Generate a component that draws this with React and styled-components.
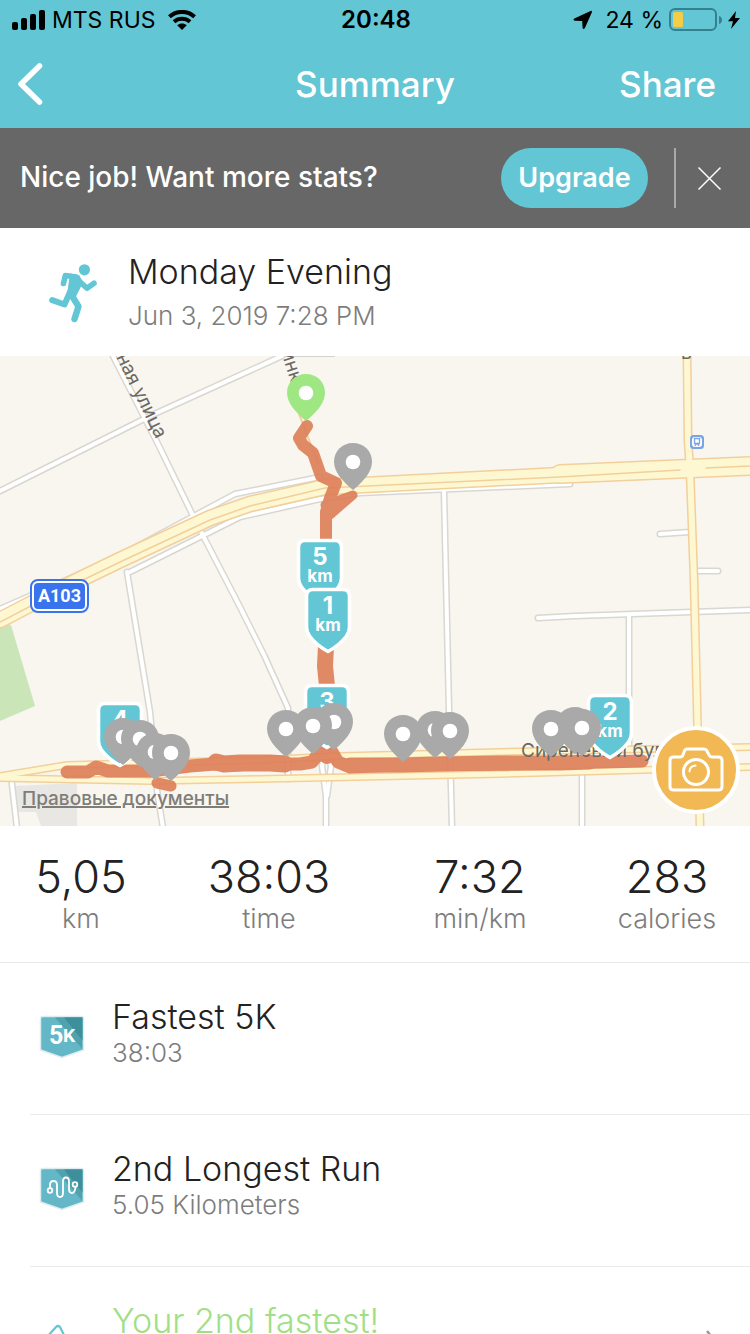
import React from "react";
import styled, { createGlobalStyle } from "styled-components";

const teal = "#62c6d5";

const GlobalStyle = createGlobalStyle`
  * { box-sizing: border-box; }
  body {
    margin: 0;
    background: #fff;
    color: #222;
    font-family: Inter, "Liberation Sans", sans-serif;
  }
  button { border: 0; padding: 0; background: none; font-family: inherit; cursor: pointer; }
  h1, h2, h3, p, ul { margin: 0; padding: 0; font-weight: inherit; }
  svg { display: block; }
`;

const Screen = styled.div`
  display: flex;
  flex-direction: column;
  height: 100vh;
  overflow: hidden;
`;

const StatusBar = styled.div`
  flex: none;
  display: grid;
  grid-template-columns: 1fr auto 1fr;
  align-items: center;
  height: 40px;
  padding: 0 10px 0 12px;
  background: ${teal};
  color: #000;
  font-size: 23px;
  line-height: 40px;
`;

const StatusGroup = styled.div`
  display: flex;
  align-items: center;
  justify-content: ${(p) => (p.$end ? "flex-end" : "flex-start")};
  gap: 6px;
  white-space: nowrap;
`;

const StatusText = styled.span`
  margin: ${(p) => (p.$end ? "0 0 0 6px" : "0 6px 0 0")};
`;

const Clock = styled.div`
  font-size: 24px;
  font-weight: 600;
`;

const NavBar = styled.header`
  flex: none;
  display: grid;
  grid-template-columns: 1fr auto 1fr;
  align-items: center;
  height: 88px;
  padding: 0 16px;
  background: ${teal};
  color: #fff;
`;

const NavTitle = styled.h1`
  font-size: 35px;
  font-weight: 500;
`;

const NavButton = styled.button`
  justify-self: ${(p) => (p.$end ? "end" : "start")};
  margin-right: ${(p) => (p.$end ? 18 : 0)}px;
  color: #fff;
  font-size: 35px;
  font-weight: 500;
`;

const Banner = styled.section`
  flex: none;
  display: flex;
  align-items: center;
  height: 100px;
  padding: 0 28px 0 20px;
  background: #676767;
  color: #fff;
  font-size: 28px;
  font-weight: 500;
`;

const BannerText = styled.p`
  flex: 1;
  padding-bottom: 2px;
`;

const UpgradeButton = styled.button`
  width: 147px;
  height: 60px;
  padding-bottom: 2px;
  border-radius: 30px;
  background: ${teal};
  color: #fff;
  font-size: 27px;
  font-weight: 600;
`;

const Divider = styled.span`
  width: 2px;
  height: 60px;
  margin: 0 21px 0 26px;
  background: #a9a9a9;
`;

const Activity = styled.section`
  flex: none;
  display: flex;
  align-items: center;
  height: 128px;
  padding: 4px 0 0 48px;
  gap: 30px;
`;

const ActivityName = styled.h2`
  font-size: 34px;
  font-weight: 300;
  line-height: 44px;
`;

const Muted = styled.p`
  color: #7d7d7d;
  font-size: 26px;
  font-weight: 300;
  line-height: ${(p) => (p.$tall ? 44 : 32)}px;
`;

const MapArea = styled.section`
  flex: none;
  position: relative;
  height: 470px;
  overflow: hidden;
  background: #f8f6ee;
`;

const MapDrawing = styled.svg`
  width: 100%;
  height: 100%;
`;

const Marker = styled.div`
  position: absolute;
  left: ${(p) => p.$x}px;
  top: ${(p) => p.$y}px;
`;

const Shield = styled(Marker)`
  width: 48px;
  height: 67px;
  color: #fff;
  font-weight: 700;
  text-align: center;
`;

const ShieldShape = styled.svg`
  position: absolute;
  inset: 0;
`;

const ShieldNumber = styled.div`
  position: relative;
  padding-top: 6px;
  font-size: 24px;
  line-height: 26px;
`;

const ShieldUnit = styled.div`
  position: relative;
  font-size: 17px;
  line-height: 12px;
`;

const RoadBadge = styled(Marker)`
  width: 59px;
  height: 34px;
  border: 2px solid #3973ee;
  border-radius: 8px;
  background: #fff;
  padding: 2px;
`;

const RoadNumber = styled.div`
  border-radius: 4px;
  background: #3973ee;
  color: #fff;
  font-family: Roboto, sans-serif;
  font-size: 18px;
  font-weight: 700;
  line-height: 26px;
  text-align: center;
`;

const LegalLink = styled.a`
  position: absolute;
  left: 22px;
  bottom: 15px;
  color: #7f7d79;
  font-size: 19px;
  font-weight: 500;
  line-height: 24px;
  text-decoration-thickness: 2px;
`;

const CameraButton = styled.button`
  position: absolute;
  right: 10px;
  bottom: 12px;
  width: 88px;
  height: 88px;
  border: 4px solid #fff;
  border-radius: 50%;
  background: #f1b853;
  display: grid;
  place-items: center;
`;

const Stats = styled.section`
  flex: none;
  display: grid;
  grid-template-columns: 162fr 214fr 208fr 166fr;
  height: 137px;
  padding-top: 25px;
  border-bottom: 1px solid #e8e8e8;
  text-align: center;
`;

const StatValue = styled.p`
  font-size: 45px;
  font-weight: 300;
  line-height: 52px;
`;

const StatLabel = styled(Muted)`
  font-size: 27px;
`;

const Achievements = styled.ul`
  list-style: none;
  padding-left: 30px;
`;

const Achievement = styled.li`
  display: flex;
  height: 152px;
  padding: 34px 34px 0 8px;
  border-bottom: 1px solid #ebebeb;
`;

const AchievementIcon = styled.div`
  width: 74px;
  padding-top: 18px;
`;

const AchievementBody = styled.div`
  flex: 1;
`;

const AchievementName = styled.h3`
  color: ${(p) => (p.$highlight ? "#a0df87" : "#222")};
  font-size: 34px;
  font-weight: 300;
  line-height: 40px;
`;

const MedalText = styled.text`
  fill: #fff;
  font-family: Roboto, sans-serif;
  font-weight: 700;
`;

const StreetText = styled.text`
  fill: #6b6864;
  font-family: Inter, sans-serif;
  font-size: 19px;
`;

const SignalIcon = () => (
  <svg width="34" height="21" viewBox="0 0 34 21" aria-hidden="true">
    <rect x="0" y="12" width="6" height="8" rx="2" />
    <rect x="9" y="8" width="6" height="12" rx="2" />
    <rect x="18" y="4" width="6" height="16" rx="2" />
    <rect x="27" y="0" width="6" height="20" rx="2" />
  </svg>
);

const WifiIcon = () => (
  <svg width="28" height="20" viewBox="0 0 28 20" aria-hidden="true">
    <g fill="none" stroke="#000" strokeWidth="4">
      <path d="M1.4 6.7C8.5 .3 19.5 .3 26.6 6.7" />
      <path d="M6 11.7c4.7-3.9 11.3-3.9 16 0" />
    </g>
    <path d="M14 20l-4.8-4.8c2.8-2.3 6.8-2.3 9.6 0z" />
  </svg>
);

const LocationIcon = () => (
  <svg width="20" height="20" viewBox="0 0 20 20" aria-hidden="true">
    <path d="M17.600 1 1.300 8.400Q-.6 10.300 1.800 10.800L9.200 11 9.600 17.800Q10.200 20.300 11.900 18L18.900 2.300Q19.300.400 17.600 1z" />
  </svg>
);

const BatteryIcon = () => (
  <svg width="53" height="24" viewBox="0 0 53 24" aria-hidden="true">
    <rect x="1" y="1" width="46" height="21" rx="5" fill="none" stroke="#34808c" strokeWidth="2" />
    <rect x="4" y="4" width="10" height="15" rx="1.5" fill="#f4cc45" />
    <path d="M50 8c4 1 4 7 0 8z" fill="#34808c" />
  </svg>
);

const BoltIcon = () => (
  <svg width="12" height="20" viewBox="0 0 12 20" aria-hidden="true">
    <path d="M8 1 0 11.3h5L3 19l9-11H7z" />
  </svg>
);

const BackIcon = () => (
  <svg width="30" height="44" viewBox="0 0 30 44" aria-hidden="true">
    <path d="M23.5 4 5 22l18.500 18" fill="none" stroke="#fff" strokeWidth="5.5" strokeLinecap="round" strokeLinejoin="round" />
  </svg>
);

const CloseIcon = () => (
  <svg width="25" height="25" viewBox="0 0 25 25" aria-hidden="true">
    <path d="m1.500 1.500 22 22m0-22-22 22" stroke="#fff" strokeWidth="1.5" />
  </svg>
);

const RunnerIcon = () => (
  <svg width="50" height="60" viewBox="0 0 50 60" aria-hidden="true">
    <circle cx="36.4" cy="5.8" r="5.6" fill={teal} />
    <g fill="none" stroke={teal} strokeLinecap="round" strokeLinejoin="round">
      <path d="M15.500 19.500 17.300 11.500 28 13" strokeWidth="5.6" />
      <path d="m31 17 8 7.300 7-5" strokeWidth="5.6" />
      <path d="M4.200 36.200 16.500 40.500 22 28" strokeWidth="6" />
      <path d="m23.500 31 7 11.500L26.500 55" strokeWidth="6.4" />
    </g>
    <path d="M22 9.500l9.500 2 3.500 7-7.500 15-8.500-3z" fill={teal} />
  </svg>
);

const CameraIcon = () => (
  <svg width="56" height="46" viewBox="0 0 56 46" fill="none" stroke="#fff" strokeWidth="3" strokeLinejoin="round" aria-hidden="true">
    <path d="M5.500 10H12q2.300 0 3-2l1.400-4Q17.200 2 19.500 2h16Q38 2 39 4l2 4q1 2 3.200 2h6.300Q54 10 54 13.500v26Q54 43 50.500 43h-45Q2 43 2 39.500v-26Q2 10 5.500 10z" />
    <circle cx="28" cy="25" r="12.5" />
    <path d="M21.500 24.500q.3-5.400 6-6" strokeWidth="2" strokeLinecap="round" />
  </svg>
);

const Medal = ({ children }) => (
  <svg width="48" height="46" viewBox="0 0 48 46" aria-hidden="true">
    <path d="M4.500 1.500h39q2 0 2 2v31.500L24 42.500 2.500 35V3.500q0-2 2-2z" fill="#63b7c6" stroke="#dcecef" strokeWidth="1.5" />
    <path d="M17 2.500h27v31z" fill="#50a2ae" />
    <path d="M26 2.500h18.500v23z" fill="#3d8f9b" />
    {children}
  </svg>
);

const RouteGlyph = () => (
  <g fill="none" stroke="#fff" strokeWidth="1.8" strokeLinecap="round">
    <circle cx="12" cy="23.5" r="2.3" />
    <circle cx="37" cy="17.5" r="2.3" />
    <path d="M12 21V18q0-4 3.500-4t3.500 4v8q0 4 3 4t3-4V14.500q0-4 3-4t3 4V22q0 4 3 4t3.500-6" />
  </g>
);

const ShoeIcon = () => (
  <svg width="48" height="46" viewBox="0 0 48 46" aria-hidden="true">
    <path d="m9 18 9-10q2-2 4 0l5 10 12 8v10H8z" fill="none" stroke={teal} strokeWidth="2.2" strokeLinejoin="round" />
  </svg>
);

const PinIcon = ({ color }) => (
  <svg width="38" height="48" viewBox="0 0 38 48" aria-hidden="true">
    <path d="M19 0C8.500 0 0 8 0 18.500 0 29 8 37 16 44.500L19 47l3-2.500C30 37 38 29 38 18.500 38 8 29.500 0 19 0z" fill={color} />
    <circle cx="19" cy="19" r="7.3" fill="#fff" />
  </svg>
);

const whiteRoads = [
  "M0 135 150 60 282 0",
  "M112-2 158 88 198 170 240 251 264 299 288 352V423",
  "M0 253 110 205 235 138 320 121",
  "M130 216 240 161 320 143 360 137 570 128",
  "M444 135 446 224 449 354 452 472",
  "M127 216 150 356 157 434 163 472",
  "M11 420 17 472",
  "M326 390 322 410 326 440V472",
  "M326 390 331 410 327 440",
  "M582 415V472",
  "M629 259V390",
  "M538 262 575 260 750 254",
  "M660 178 690 176",
  "M696 215 718 215",
];

const yellowRoads = [
  { d: "M0 264 50 238 120 204 210 162 250 148 325 131 560 119 750 110", w: 14 },
  { d: "M560 118 750 110", w: 17 },
  { d: "M687-4 688 84 690 114 694 224 700 472", w: 6 },
  { d: "M0 420 67 409 260 404 340 400 500 396 750 391", w: 5 },
  { d: "M0 422 150 425 260 423 500 418 750 411", w: 5 },
];

const routePaths = [
  { d: "M307 70 299 82 303 89 313 97 321 120 336 127 330 142 326 156 V190", w: 12 },
  { d: "M326 290 325 310 327 330V400", w: 16 },
  { d: "M67 416 88 416 96 411 108 415 150 415 190 410 215 408 240 409", w: 13 },
  { d: "M216 406 224 408 240 407 270 407 285 408", w: 17 },
  { d: "M285 408 300 408 312 406 320 396 332 396 338 406 350 411 400 409 500 408 560 407 642 405", w: 13 },
  { d: "M350 409 400 409 440 408 500 407 560 407 590 406", w: 15 },
  { d: "M157 427 171 430", w: 11 },
];

const shields = [
  { n: 5, x: 296, y: 182 },
  { n: 1, x: 304, y: 231 },
  { n: 3, x: 303, y: 327 },
  { n: 4, x: 96, y: 345 },
  { n: 2, x: 586, y: 337 },
];

/* Later pins are drawn over earlier ones; x and y are the centre of the white dot. */
const pins = [
  { x: 306, y: 37, color: "#9fe783" },
  { x: 353, y: 106 },
  { x: 123, y: 381 },
  { x: 140, y: 383 },
  { x: 155, y: 396 },
  { x: 171, y: 397 },
  { x: 334, y: 366 },
  { x: 313, y: 370 },
  { x: 286, y: 373 },
  { x: 403, y: 378 },
  { x: 435, y: 374 },
  { x: 450, y: 375 },
  { x: 575, y: 370 },
  { x: 582, y: 372 },
  { x: 551, y: 373 },
];

const RunMap = () => (
  <MapArea aria-label="Route map">
    <MapDrawing viewBox="0 0 750 470" preserveAspectRatio="xMinYMin slice">
      <path d="M0 267 11 269 35 350 0 365z" fill="#cae6b9" />
      <path d="M15 430 77 427V470H41L36 456H17z" fill="#e9e7e3" />
      <path d="M280 0H335" stroke="#d3d1cc" strokeWidth="2" />
      <g fill="none" strokeLinecap="round" strokeLinejoin="round">
        {whiteRoads.map((d) => <path key={d} d={d} stroke="#d9d7d2" strokeWidth="7" />)}
        {whiteRoads.map((d) => <path key={d} d={d} stroke="#fff" strokeWidth="4" />)}
        {yellowRoads.map((r) => <path key={r.d} d={r.d} stroke="#f3cf9b" strokeWidth={r.w + 3} />)}
        {yellowRoads.map((r) => <path key={r.d} d={r.d} stroke="#fef8d2" strokeWidth={r.w} />)}
        <path d="M0 266 50 240 120 206 210 164 250 150 325 132 560 121 680 114M706 112 750 110" stroke="#f3cf9b" strokeWidth="1.5" />
        <path d="M299 58 318 107" stroke="#f3cf9b" strokeWidth="2" />
      </g>
      <StreetText transform="translate(116 1) rotate(64)">ная улица</StreetText>
      <StreetText transform="translate(281 -4) rotate(72)">инк</StreetText>
      <StreetText x="681" y="3">в</StreetText>
      <g opacity="0.92" fill="none" stroke="#df805a" strokeLinecap="round" strokeLinejoin="round">
        {routePaths.map((r) => <path key={r.d} d={r.d} strokeWidth={r.w} />)}
        <path d="M325 149 353 139 330 159z" fill="#df805a" strokeWidth="9" />
      </g>
      <StreetText x="521" y="401">Сиреневый бульвар</StreetText>
      <g>
        <rect x="690" y="79" width="14" height="14" rx="3.5" fill="#7ba4e6" />
        <rect x="692" y="81" width="10" height="10" rx="3" fill="#fff" />
        <path d="M694.500 82.500h5v5h-5zM695 90l1-2h2l1 2" fill="none" stroke="#7ba4e6" strokeWidth="1.3" />
      </g>
    </MapDrawing>

    <RoadBadge $x={30} $y={223}>
      <RoadNumber>A103</RoadNumber>
    </RoadBadge>
    <LegalLink href="#legal">Правовые документы</LegalLink>

    {shields.map((s) => (
      <Shield key={s.n} $x={s.x} $y={s.y}>
        <ShieldShape width="48" height="67" viewBox="0 0 48 67" aria-hidden="true">
          <path d="M9 2.500h30q6.500 0 6.500 6.500v31q0 5-3 9Q36 58 24 64.500 12 58 5.500 49q-3-4-3-9V9q0-6.500 6.500-6.500z" fill={teal} stroke="#fff" strokeWidth="3.6" />
        </ShieldShape>
        <ShieldNumber>{s.n}</ShieldNumber>
        <ShieldUnit>km</ShieldUnit>
      </Shield>
    ))}

    {pins.map((p) => (
      <Marker key={`${p.x}-${p.y}`} $x={p.x - 19} $y={p.y - 19}>
        <PinIcon color={p.color || "#a9a9a9"} />
      </Marker>
    ))}

    <CameraButton aria-label="Add photo"><CameraIcon /></CameraButton>
  </MapArea>
);

const stats = [
  ["5,05", "km"],
  ["38:03", "time"],
  ["7:32", "min/km"],
  ["283", "calories"],
];

export default function App() {
  return (
    <>
      <GlobalStyle />
      <Screen>
        <StatusBar>
          <StatusGroup>
            <SignalIcon />
            <StatusText>MTS RUS</StatusText>
            <WifiIcon />
          </StatusGroup>
          <Clock>20:48</Clock>
          <StatusGroup $end>
            <LocationIcon />
            <StatusText $end>24 %</StatusText>
            <BatteryIcon />
            <BoltIcon />
          </StatusGroup>
        </StatusBar>
        <NavBar>
          <NavButton aria-label="Back"><BackIcon /></NavButton>
          <NavTitle>Summary</NavTitle>
          <NavButton $end>Share</NavButton>
        </NavBar>
        <Banner>
          <BannerText>Nice job! Want more stats?</BannerText>
          <UpgradeButton>Upgrade</UpgradeButton>
          <Divider />
          <button aria-label="Close"><CloseIcon /></button>
        </Banner>
        <Activity>
          <RunnerIcon />
          <div>
            <ActivityName>Monday Evening</ActivityName>
            <Muted $tall>Jun 3, 2019 7:28 PM</Muted>
          </div>
        </Activity>
        <RunMap />
        <Stats>
          {stats.map(([value, label]) => (
            <div key={label}>
              <StatValue>{value}</StatValue>
              <StatLabel>{label}</StatLabel>
            </div>
          ))}
        </Stats>
        <Achievements>
          <Achievement>
            <AchievementIcon>
              <Medal>
                <MedalText x="11" y="29" fontSize="25">5</MedalText>
                <MedalText x="25" y="27" fontSize="19">K</MedalText>
              </Medal>
            </AchievementIcon>
            <AchievementBody>
              <AchievementName>Fastest 5K</AchievementName>
              <Muted>38:03</Muted>
            </AchievementBody>
          </Achievement>
          <Achievement>
            <AchievementIcon><Medal><RouteGlyph /></Medal></AchievementIcon>
            <AchievementBody>
              <AchievementName>2nd Longest Run</AchievementName>
              <Muted>5.05 Kilometers</Muted>
            </AchievementBody>
          </Achievement>
          <Achievement>
            <AchievementIcon><ShoeIcon /></AchievementIcon>
            <AchievementBody>
              <AchievementName $highlight>Your 2nd fastest!</AchievementName>
            </AchievementBody>
            <svg width="14" height="60" viewBox="0 0 14 60" aria-hidden="true">
              <path d="m5 30 8 10-8 10" fill="none" stroke="#999" strokeWidth="2.5" />
            </svg>
          </Achievement>
        </Achievements>
      </Screen>
    </>
  );
}
